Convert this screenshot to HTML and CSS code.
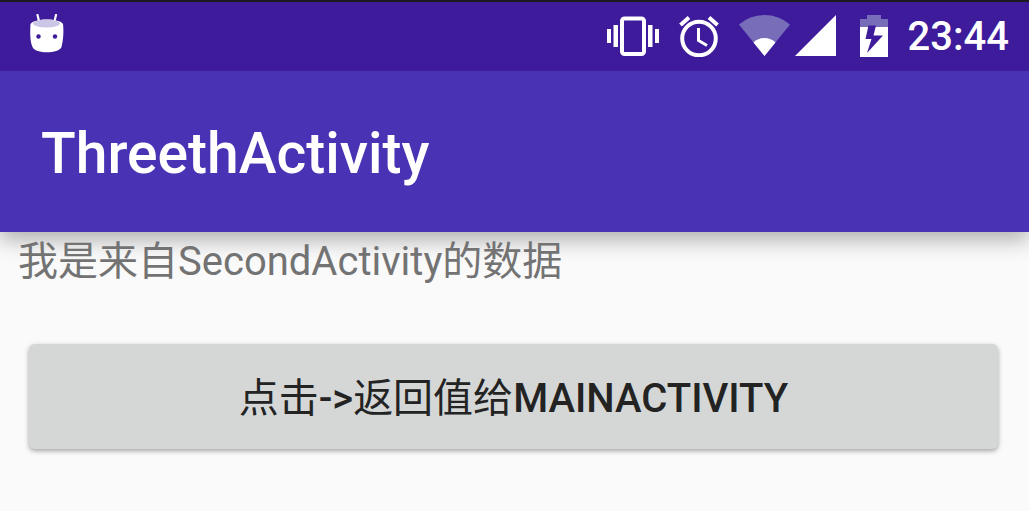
FILE: index.html
```html
<!DOCTYPE html>
<html lang="zh-CN">
<head>
<meta charset="utf-8">
<meta name="viewport" content="width=device-width, initial-scale=1">
<title>ThreethActivity</title>
<link rel="stylesheet" href="styles.css">
</head>
<body>
<div class="status-bar">
  <svg class="notification" width="34" height="40" viewBox="0 0 34 40" aria-hidden="true">
    <path d="M7.500 1 9.500 9M26 1 24 9" fill="none" stroke="#fff" stroke-width="2.200" stroke-linecap="round"/>
    <path d="M0.500 10C4 4 30 4 33 10C34 19 33 27 31.500 33C29 40 5 40 2.500 33C0 27 0 19 0.500 10Z" fill="#fff"/>
    <ellipse cx="16.500" cy="9.500" rx="13.500" ry="4" fill="#cbc5e6"/>
    <circle cx="8.500" cy="22.500" r="2.200" fill="#3d1b9b"/>
    <circle cx="25" cy="22.500" r="2.200" fill="#3d1b9b"/>
  </svg>
  <div class="system">
    <svg width="52" height="42" viewBox="0 0 52 42" aria-hidden="true">
      <path d="M0 14h4v14H0zM6.500 10h4.500v22H6.500zM41 10h4.500v22H41zM48 14h4v14h-4z" fill="#fff"/>
      <rect x="15" y="3.500" width="22" height="35.500" rx="2.500" fill="none" stroke="#fff" stroke-width="4"/>
    </svg>
    <svg class="alarm" width="42" height="42" viewBox="0 0 42 42" aria-hidden="true">
      <g fill="none" stroke="#fff" stroke-width="4">
        <circle cx="20" cy="23.500" r="16.800"/>
        <path d="M1.500 10 10 2.500M30 2.500 38.500 10"/>
        <path d="M19.500 13V25.500L28 30.500" stroke-width="3"/>
      </g>
    </svg>
    <svg class="wifi" width="52" height="42" viewBox="0 0 52 42" aria-hidden="true">
      <path d="M0 9.500Q11 0 25.500 0T51 9.500L25.500 41Z" fill="#776db9"/>
      <path d="M14.500 27.500Q19 23 25.500 23T36.500 27.500L25.500 41Z" fill="#fff"/>
    </svg>
    <svg class="signal" width="42" height="42" viewBox="0 0 42 42" aria-hidden="true">
      <path d="M0 41 41 0V41Z" fill="#fff"/>
    </svg>
    <svg class="battery" width="28" height="42" viewBox="0 0 28 42" aria-hidden="true">
      <path d="M0 4H7V0H21V4H28V12H0Z" fill="#776db9"/>
      <path d="M0 12H28V42H0Z" fill="#fff"/>
      <path d="M8.500 10.500H16L13.500 20.500H23L7 38 11.500 24H5.500Z" fill="#3d1b9b"/>
    </svg>
    <time class="clock">23:44</time>
  </div>
</div>
<header class="app-bar"><h1 class="title">ThreethActivity</h1></header>
<main class="content">
  <p class="message">我是来自SecondActivity的数据</p>
  <button class="return-button" type="button"><span class="han">点击</span>-&gt;<span class="han">返回值给</span>MAINACTIVITY</button>
</main>
</body>
</html>
```
FILE: styles.css
```css
* {
  box-sizing: border-box;
}

body {
  margin: 0;
  min-height: 100vh;
  background: #fafafa;
  font-family: Roboto, "Noto Sans CJK SC", sans-serif;
}

.status-bar {
  position: relative;
  z-index: 2;
  display: flex;
  align-items: center;
  justify-content: space-between;
  height: 71px;
  padding: 0 20px 0 30px;
  border-top: 2px solid #1c1a20;
  background: #3d1b9b;
}

.notification {
  margin-bottom: 6px;
}

.system {
  display: flex;
  align-items: center;
}

.system svg {
  margin-bottom: 2px;
}

.system .alarm {
  margin-left: 20px;
}

.system .wifi {
  margin-left: 18px;
}

.system .signal {
  margin-left: 4px;
}

.system .battery {
  margin-left: 23px;
}

.clock {
  margin-left: 20px;
  color: #fff;
  font-size: 40px;
  font-weight: 500;
  line-height: 48px;
}

.app-bar {
  position: relative;
  z-index: 1;
  padding: 51px 41px 46px;
  background: #4932b3;
  box-shadow: 0 8px 20px rgba(0, 0, 0, 0.3);
}

.title {
  margin: 0;
  color: #fff;
  font-size: 57px;
  font-weight: 500;
  line-height: 64px;
}

.content {
  padding: 2px 31px 62px 29px;
}

.message {
  position: relative;
  z-index: 2;
  margin: 0 0 54px -11px;
  color: #737373;
  font-size: 40px;
  line-height: 56px;
}

.return-button {
  display: block;
  width: 100%;
  padding: 26px 24px 22px;
  border: 0;
  border-radius: 6px;
  background: #d5d7d6;
  box-shadow: 0 2px 5px rgba(0, 0, 0, 0.35);
  color: #232323;
  font-family: inherit;
  font-size: 40px;
  font-weight: 500;
  line-height: 57px;
}

.han {
  font-weight: 400;
}
```
